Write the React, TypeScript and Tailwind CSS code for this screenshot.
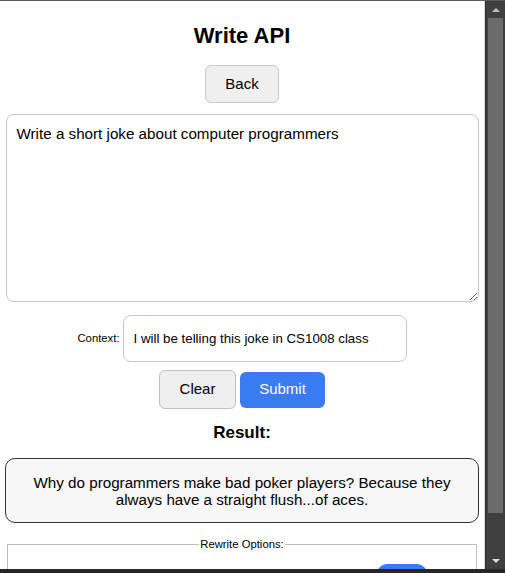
import React from "react";

export default function App() {
  return (
    <div className="w-[505px] h-[573px] flex flex-col bg-[#2b2b2b] overflow-hidden font-['Liberation_Sans',Arial,sans-serif] text-black">
      <div className="h-[1px] bg-[#5c5c5c] shrink-0" />
      <div className="flex flex-1 min-h-0">
        <main className="w-[485px] bg-white overflow-hidden flex flex-col items-center border-r border-[#d9d9d9]">
          <h1 className="shrink-0 mt-[22px] text-[22px] leading-[26px] font-bold">Write API</h1>
          <button className="shrink-0 mt-[16px] h-[38px] w-[74px] text-[15px] bg-[#efefef] border border-[#c8c8c8] rounded-[6px]">
            Back
          </button>
          <textarea
            className="shrink-0 mt-[11px] w-[473px] h-[188px] px-[10px] py-[10px] text-[15.2px] leading-[18px] border border-[#c6c6c6] rounded-[8px] font-['Liberation_Sans',Arial,sans-serif] text-black outline-none"
            defaultValue="Write a short joke about computer programmers"
          />
          <div className="shrink-0 mt-[13px] flex items-center gap-[3px]">
            <label className="text-[11.3px]">Context:</label>
            <input
              className="w-[284px] h-[47px] px-[10px] text-[13.3px] border border-[#c6c6c6] rounded-[8px] font-['Liberation_Sans',Arial,sans-serif] text-black outline-none"
              defaultValue="I will be telling this joke in CS1008 class"
            />
          </div>
          <div className="shrink-0 mt-[8px] flex items-center gap-[4px]">
            <button className="h-[39px] w-[77px] text-[15px] bg-[#efefef] border border-[#c0c0c0] rounded-[6px]">
              Clear
            </button>
            <button className="h-[36px] w-[85px] text-[15px] bg-[#3a7bf2] text-white rounded-[6px]">
              Submit
            </button>
          </div>
          <h3 className="shrink-0 mt-[14px] text-[17px] leading-[20px] font-bold">Result:</h3>
          <div className="shrink-0 mt-[15px] w-[474px] h-[65px] flex items-center justify-center px-[20px] bg-[#f7f7f7] border border-[#333] rounded-[10px] text-[15.2px] leading-[17px] text-center">
            Why do programmers make bad poker players? Because they always have a straight flush...of aces.
          </div>
          <fieldset className="shrink-0 mt-[15px] w-[470px] border border-[#bdbdbd] px-[8px] pb-[10px]">
            <legend className="mx-auto px-[1px] text-[11.3px] leading-[13px]">Rewrite Options:</legend>
            <div className="flex justify-end pt-[13px] pr-[41px]">
              <div className="h-[36px] w-[50px] bg-[#3a7bf2] rounded-[10px]" />
            </div>
          </fieldset>
        </main>
        <div className="w-[20px] flex flex-col bg-[#3f3f3f] border-l border-[#2e2e2e]">
          <div className="h-[17px] shrink-0 flex items-center justify-center">
            <div className="w-0 h-0 border-l-[4px] border-r-[4px] border-b-[4px] border-l-transparent border-r-transparent border-b-[#bdbdbd]" />
          </div>
          <div className="mx-[2px] h-[495px] shrink-0 bg-[#6b6b6b]" />
          <div className="flex-1" />
          <div className="h-[17px] shrink-0 flex items-center justify-center">
            <div className="w-0 h-0 border-l-[4px] border-r-[4px] border-t-[4px] border-l-transparent border-r-transparent border-t-[#dcdcdc]" />
          </div>
        </div>
      </div>
      <div className="h-[4px] bg-[#262626] shrink-0" />
    </div>
  );
}
